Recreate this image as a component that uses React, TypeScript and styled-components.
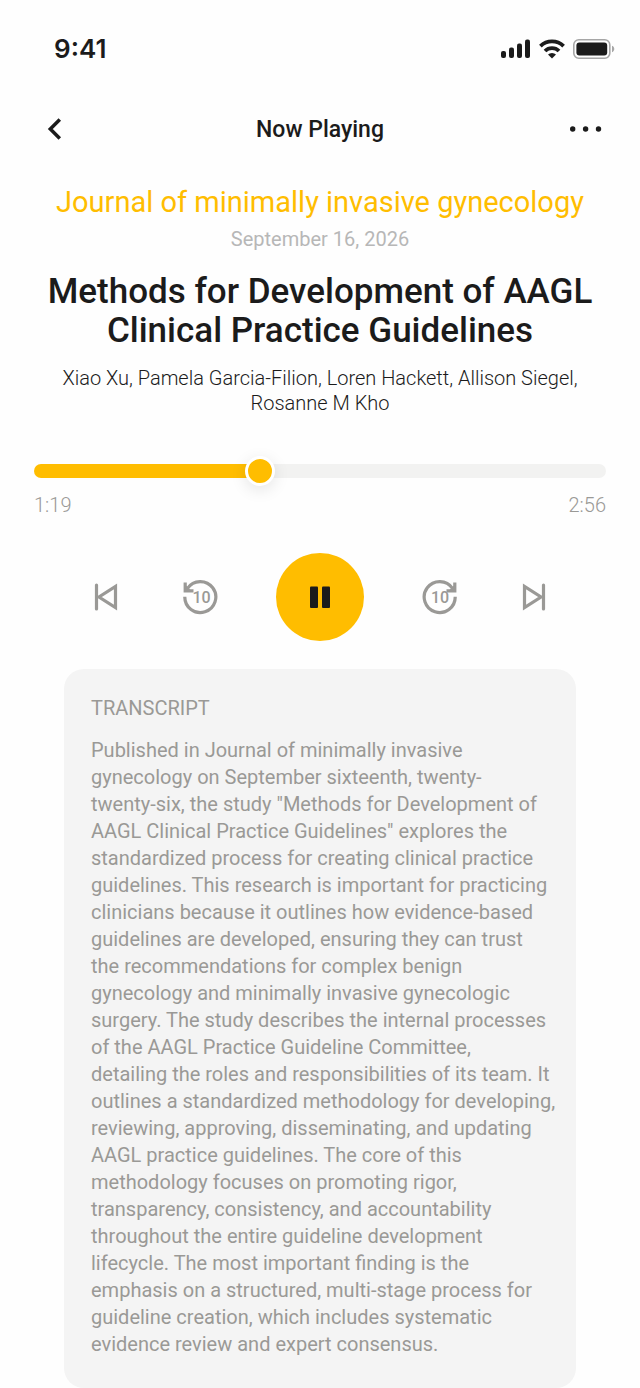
import React, { Fragment, useState } from "react";
import styled, { createGlobalStyle } from "styled-components";

const color = {
  ink: "#1b1b1b",
  accent: "#ffbd00",
  muted: "#9a9996",
  faint: "#b7b7b7",
  track: "#f2f2f1",
  card: "#f4f4f4",
};

const GlobalStyle = createGlobalStyle`
  *, *::before, *::after { box-sizing: border-box; }
  body {
    margin: 0;
    background: #fefefe;
    color: ${color.ink};
    font-family: Roboto, "Liberation Sans", sans-serif;
  }
  h1, h2, p { margin: 0; font-weight: 400; }
  button {
    padding: 0;
    border: 0;
    background: none;
    color: inherit;
    font: inherit;
    cursor: pointer;
  }
  svg { display: block; }
`;

const Screen = styled.div`
  display: flex;
  flex-direction: column;
  padding-top: 34px;
`;

const StatusBar = styled.div`
  display: flex;
  align-items: center;
  justify-content: space-between;
  padding: 0 25px 0 54px;
`;

const Clock = styled.time`
  font: 600 26px/30px Inter, sans-serif;
`;

const StatusIcons = styled.div`
  display: flex;
  align-items: center;
  gap: 8px;
`;

const TopBar = styled.header`
  display: grid;
  grid-template-columns: 44px 1fr 44px;
  align-items: center;
  margin-top: 43px;
  padding: 0 32px;
`;

const TopTitle = styled.h2`
  padding-top: 2px;
  font-size: 23px;
  line-height: 28px;
  font-weight: 500;
  text-align: center;
`;

const IconButton = styled.button<{ $size: number }>`
  display: flex;
  align-items: center;
  justify-content: center;
  width: ${(p) => p.$size}px;
  height: ${(p) => p.$size}px;
`;

const Article = styled.section`
  display: flex;
  flex-direction: column;
  margin-top: 33px;
  padding: 0 34px;
  text-align: center;
`;

const Journal = styled.p`
  color: ${color.accent};
  font-size: 29px;
  line-height: 36px;
`;

const PublishedOn = styled.p`
  margin-top: 7px;
  color: ${color.faint};
  font-size: 20px;
  line-height: 24px;
`;

const Title = styled.h1`
  margin-top: 21px;
  font-size: 35px;
  line-height: 39px;
  font-weight: 500;
`;

const Authors = styled.p`
  margin-top: 16px;
  padding: 0 24px;
  font-size: 20px;
  line-height: 25px;
  font-weight: 300;
`;

const Progress = styled.div`
  margin-top: 40px;
  padding: 0 34px;
`;

const Seek = styled.input`
  appearance: none;
  display: block;
  width: 100%;
  height: 30px;
  margin: 0;
  background: none;
  cursor: pointer;

  &::-webkit-slider-runnable-track {
    height: 14px;
    border-radius: 7px;
    background: linear-gradient(
      to right,
      ${color.accent} var(--played),
      ${color.track} var(--played)
    );
  }

  &::-webkit-slider-thumb {
    appearance: none;
    width: 30px;
    height: 30px;
    margin-top: -8px;
    border: 3px solid #fff;
    border-radius: 50%;
    background: ${color.accent};
    box-shadow: 0 4px 16px rgba(0, 0, 0, 0.1);
  }
`;

const Times = styled.div`
  display: flex;
  justify-content: space-between;
  margin-top: 7px;
  color: ${color.muted};
  font-size: 20px;
  line-height: 24px;
  font-weight: 300;
`;

const Controls = styled.div`
  display: flex;
  align-items: center;
  justify-content: center;
  gap: 58px;
  margin-top: 36px;
  color: ${color.muted};
`;

const PlayButton = styled(IconButton)`
  border-radius: 50%;
  background: ${color.accent};
  color: ${color.ink};
`;

const Seconds = styled.text`
  fill: currentColor;
  font: 500 16px Roboto, sans-serif;
`;

const Card = styled.section`
  width: 80%;
  margin: 28px auto 0;
  padding: 27px 18px 30px 27px;
  border-radius: 20px;
  background: ${color.card};
  color: ${color.muted};
  font-size: 20px;
`;

const CardTitle = styled.h2`
  font-size: 20px;
  line-height: 24px;
  text-transform: uppercase;
`;

const CardText = styled.p`
  margin-top: 17px;
  line-height: 27px;
`;

const SignalIcon = () => (
  <svg width="30" height="20" viewBox="0 0 30 20" fill="currentColor" aria-hidden="true">
    <rect x="0" y="12" width="5" height="7" rx="2" />
    <rect x="8" y="8.5" width="5" height="10.5" rx="2" />
    <rect x="16" y="4.5" width="5" height="14.5" rx="2" />
    <rect x="24" y="0.5" width="5" height="18.5" rx="2" />
  </svg>
);

const WifiIcon = () => (
  <svg width="26" height="20" viewBox="0 0 26 20" aria-hidden="true">
    <g fill="none" stroke="currentColor" strokeWidth="3.8">
      <path d="M1.4 7.2a16.6 16.6 0 0 1 23.2 0" />
      <path d="M6 12a10 10 0 0 1 14 0" />
    </g>
    <path d="M13 19.500l4-4a5.8 5.8 0 0 0-8 0z" fill="currentColor" />
  </svg>
);

const BatteryIcon = () => (
  <svg width="42" height="20" viewBox="0 0 42 20" aria-hidden="true">
    <rect x="0.8" y="0.8" width="36" height="18.4" rx="5" fill="none" stroke="#a6a6a6" strokeWidth="1.6" />
    <rect x="3.4" y="3.4" width="30.8" height="13.2" rx="3" fill="currentColor" />
    <path d="M39 6.8c3 1 3 5.4 0 6.4z" fill="#a6a6a6" />
  </svg>
);

const BackIcon = () => (
  <svg width="24" height="24" viewBox="0 0 24 24" fill="none" stroke="currentColor" strokeWidth="3.5" aria-hidden="true">
    <path d="M17.8 2.5L8.300 12l9.500 9.500" />
  </svg>
);

const MoreIcon = () => (
  <svg width="32" height="8" viewBox="0 0 32 8" fill="currentColor" aria-hidden="true">
    <circle cx="2.700" cy="4" r="2.700" />
    <circle cx="15.600" cy="4" r="2.700" />
    <circle cx="28.500" cy="4" r="2.700" />
  </svg>
);

const PreviousIcon = () => (
  <svg width="36" height="36" viewBox="0 0 36 36" fill="none" stroke="currentColor" strokeWidth="3.2" aria-hidden="true">
    <path d="M8.5 6v24" strokeLinecap="round" />
    <path d="M27.500 7.500v21L11 18z" />
  </svg>
);

const NextIcon = () => (
  <svg width="36" height="36" viewBox="0 0 36 36" fill="none" stroke="currentColor" strokeWidth="3.2" aria-hidden="true">
    <path d="M27.500 6v24" strokeLinecap="round" />
    <path d="M8.500 7.500v21L25 18z" />
  </svg>
);

const Back10Icon = () => (
  <svg width="36" height="36" viewBox="0 0 36 36" fill="none" stroke="currentColor" strokeWidth="3.2" aria-hidden="true">
    <path d="M2.800 17.700A15.500 15.500 0 1 0 5.500 9.300" />
    <path d="M3.200 3.500v8.300h8.300" />
    <path d="M3 5.500v6h6z" fill="currentColor" stroke="none" />
    <Seconds x="19.500" y="23.700" textAnchor="middle" stroke="none">10</Seconds>
  </svg>
);

const Forward10Icon = () => (
  <svg width="36" height="36" viewBox="0 0 36 36" fill="none" stroke="currentColor" strokeWidth="3.2" aria-hidden="true">
    <path d="M33.200 17.700A15.500 15.500 0 1 1 30.500 9.300" />
    <path d="M32.800 3.500v8.300h-8.300" />
    <path d="M33 5.500v6h-6z" fill="currentColor" stroke="none" />
    <Seconds x="18" y="23.700" textAnchor="middle" stroke="none">10</Seconds>
  </svg>
);

const PauseIcon = () => (
  <svg width="36" height="36" viewBox="0 0 36 36" fill="currentColor" aria-hidden="true">
    <rect x="8" y="7.500" width="8" height="21.500" rx="1" />
    <rect x="20" y="7.500" width="8" height="21.500" rx="1" />
  </svg>
);

const PlayIcon = () => (
  <svg width="36" height="36" viewBox="0 0 36 36" fill="currentColor" aria-hidden="true">
    <path d="M11 7l18 11-18 11z" />
  </svg>
);

const transcript = [
  "Published in Journal of minimally invasive",
  "gynecology on September sixteenth, twenty-",
  'twenty-six, the study "Methods for Development of',
  'AAGL Clinical Practice Guidelines" explores the',
  "standardized process for creating clinical practice",
  "guidelines. This research is important for practicing",
  "clinicians because it outlines how evidence-based",
  "guidelines are developed, ensuring they can trust",
  "the recommendations for complex benign",
  "gynecology and minimally invasive gynecologic",
  "surgery. The study describes the internal processes",
  "of the AAGL Practice Guideline Committee,",
  "detailing the roles and responsibilities of its team. It",
  "outlines a standardized methodology for developing,",
  "reviewing, approving, disseminating, and updating",
  "AAGL practice guidelines. The core of this",
  "methodology focuses on promoting rigor,",
  "transparency, consistency, and accountability",
  "throughout the entire guideline development",
  "lifecycle. The most important finding is the",
  "emphasis on a structured, multi-stage process for",
  "guideline creation, which includes systematic",
  "evidence review and expert consensus.",
];

export default function App() {
  const [played, setPlayed] = useState(39);
  const [playing, setPlaying] = useState(true);

  return (
    <Screen>
      <GlobalStyle />
      <StatusBar>
        <Clock>9:41</Clock>
        <StatusIcons>
          <SignalIcon />
          <WifiIcon />
          <BatteryIcon />
        </StatusIcons>
      </StatusBar>

      <TopBar>
        <IconButton $size={44} aria-label="Back">
          <BackIcon />
        </IconButton>
        <TopTitle>Now Playing</TopTitle>
        <IconButton $size={44} aria-label="More options">
          <MoreIcon />
        </IconButton>
      </TopBar>

      <main>
        <Article>
          <Journal>Journal of minimally invasive gynecology</Journal>
          <PublishedOn>September 16, 2026</PublishedOn>
          <Title>Methods for Development of AAGL Clinical Practice Guidelines</Title>
          <Authors>
            Xiao Xu, Pamela Garcia-Filion, Loren Hackett, Allison Siegel, Rosanne M Kho
          </Authors>
        </Article>

        <Progress>
          <Seek
            type="range"
            aria-label="Playback position"
            min={0}
            max={100}
            value={played}
            onChange={(e) => setPlayed(Number(e.target.value))}
            style={{ "--played": `${played}%` } as React.CSSProperties}
          />
          <Times>
            <span>1:19</span>
            <span>2:56</span>
          </Times>
        </Progress>

        <Controls>
          <IconButton $size={36} aria-label="Previous">
            <PreviousIcon />
          </IconButton>
          <IconButton $size={36} aria-label="Back 10 seconds">
            <Back10Icon />
          </IconButton>
          <PlayButton
            $size={88}
            aria-label={playing ? "Pause" : "Play"}
            onClick={() => setPlaying(!playing)}
          >
            {playing ? <PauseIcon /> : <PlayIcon />}
          </PlayButton>
          <IconButton $size={36} aria-label="Forward 10 seconds">
            <Forward10Icon />
          </IconButton>
          <IconButton $size={36} aria-label="Next">
            <NextIcon />
          </IconButton>
        </Controls>

        <Card>
          <CardTitle>Transcript</CardTitle>
          <CardText>
            {transcript.map((line, i) => (
              <Fragment key={line}>
                {i > 0 && <br />}
                {line}
              </Fragment>
            ))}
          </CardText>
        </Card>
      </main>
    </Screen>
  );
}
